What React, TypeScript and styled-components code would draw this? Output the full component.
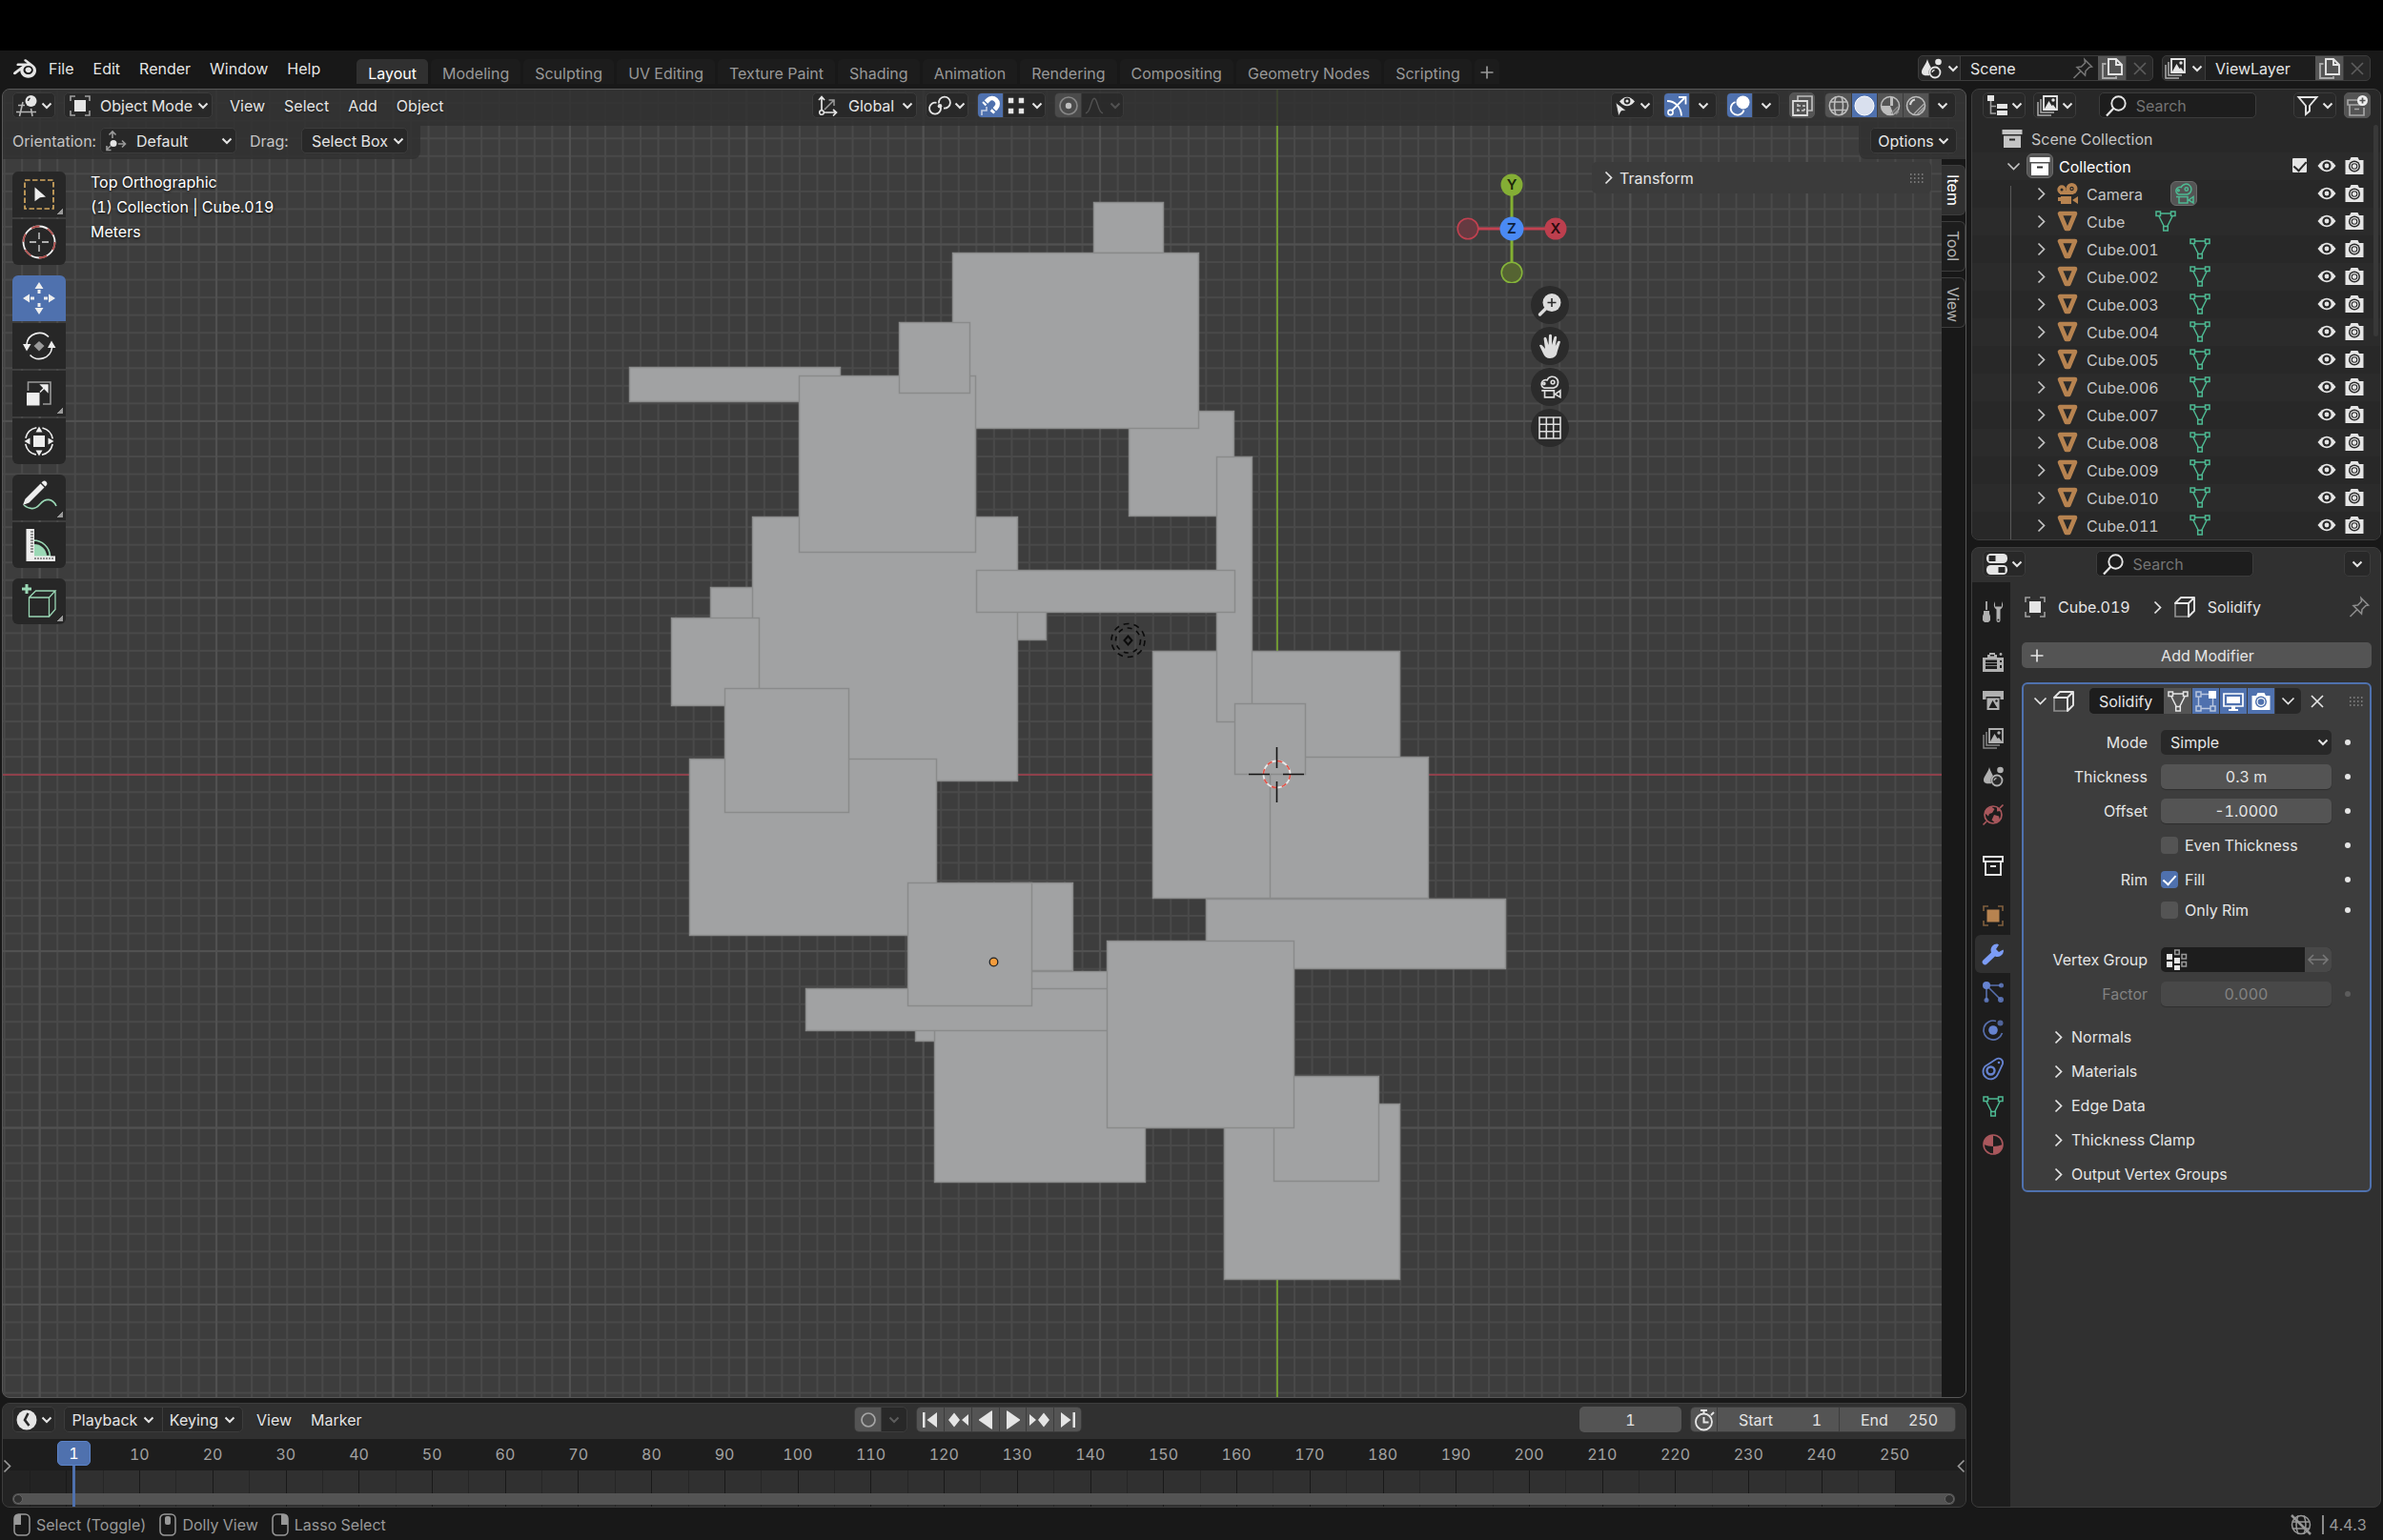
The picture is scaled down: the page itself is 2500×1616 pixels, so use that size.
import React from "react";
import styled, { createGlobalStyle, css } from "styled-components";
import { SiBlender } from "react-icons/si";

const BLUE = "#4f71ae";
const ORANGE = "#b78350";
const GREEN = "#4db992";
const RED = "#a9575c";

const GlobalStyle = createGlobalStyle`
  * { box-sizing: border-box; }
  body {
    margin: 0;
    background: #181818;
    color: #e5e5e5;
    font: 16px/20px Inter, "Noto Sans", sans-serif;
    font-variant-numeric: tabular-nums;
  }
  button, input, select {
    margin: 0;
    padding: 0;
    border: 0;
    background: none;
    color: inherit;
    font: inherit;
    font-variant-numeric: tabular-nums;
    outline: none;
  }
  svg { display: block; flex: none; }
`;

/* ---------- icons ---------- */

const Glyph = styled.svg<{ $size?: number; $color?: string }>`
  width: ${(p) => p.$size ?? 22}px;
  height: ${(p) => p.$size ?? 22}px;
  color: ${(p) => p.$color ?? "inherit"};
  fill: none;
  stroke: none;
  overflow: visible;
`;

const shapes: Record<string, React.ReactNode> = {
  editor3d: (
    <>
      <path d="M2 10.5h7M0 17.500h21M7 7L3.500 22M15.500 14l1.500 8" stroke="#b4b4b4" strokeWidth="1.6" />
      <circle cx="15.500" cy="6" r="6" fill="currentColor" />
      <path d="M12.500 6a3.500 3.500 0 0 1 2-3" stroke="#282828" strokeWidth="1.500" />
    </>
  ),
  objectMode: (
    <>
      <path d="M1 6V1h5M16 1h5v5M21 16v5h-5M6 21H1v-5" stroke="#a0a0a0" strokeWidth="1.6" />
      <rect x="5" y="5" width="12" height="12" fill="currentColor" />
    </>
  ),
  orient: (
    <>
      <path d="M7 8V2M3.500 4.500L7 1l3.500 3.500M13 14h7M17 10.500l3.500 3.500-3.500 3.500M5 16l-4 4M1 16v4.500h4.500" stroke="#9a9a9a" strokeWidth="1.6" />
      <circle cx="8" cy="13.500" r="3.500" fill="currentColor" />
    </>
  ),
  global: (
    <>
      <path d="M4 18V2M1 5l3-3.500L7 5M4 18h15M16 15l3.500 3L16 21.500" stroke="currentColor" strokeWidth="1.7" />
      <circle cx="4" cy="18" r="2.300" fill="#282828" stroke="currentColor" strokeWidth="1.500" />
      <path d="M7 15L17 5M11.500 5H17v6" stroke="#9a9a9a" strokeWidth="1.500" />
    </>
  ),
  pivot: (
    <>
      <path d="M10 8.500A6 6 0 1 1 15 13.500M12 13a6 6 0 1 1-4.500-5.200" stroke="currentColor" strokeWidth="1.8" />
      <circle cx="11" cy="11.200" r="2.300" fill="currentColor" />
    </>
  ),
  magnet: (
    <>
      <path d="M4 9.500L8.500 5A5.700 5.700 0 0 1 17 13L12.500 18" stroke="#fff" strokeWidth="4.800" />
      <path d="M3.500 5L9 10.500M12 12.500l5.500 5.500" stroke={BLUE} strokeWidth="1.400" />
      <path d="M2 21v-5h5v-4" stroke="#c5cfe3" strokeWidth="1.600" />
    </>
  ),
  snapGrid: <path d="M2 2h6v6H2zM14 2h6v6h-6zM2 14h6v6H2zM14 14h6v6h-6z" fill="currentColor" />,
  proportional: (
    <>
      <circle cx="11" cy="11" r="9" stroke="#a2a2a2" strokeWidth="1.700" />
      <circle cx="11" cy="11" r="3.200" fill="#eee" />
    </>
  ),
  falloff: <path d="M1 19.500c6 0 6-17 10-17s4 17 10 17" stroke="currentColor" strokeWidth="1.600" />,
  visibility: (
    <>
      <path d="M5 6.500Q13 -3 21 6.500Q13 16 5 6.500Z" fill="currentColor" />
      <circle cx="13" cy="6" r="3.400" fill="#282828" />
      <circle cx="13" cy="6" r="1.600" fill="currentColor" />
      <path d="M1 7.500l11 8.500-5 .5L4 22Z" fill="currentColor" stroke="#282828" strokeWidth=".8" />
    </>
  ),
  gizmo: (
    <>
      <path d="M1 6C9 6 15.500 12 16 21.500M6 16L19 3M13 2h7.500v7.500" stroke="#fff" strokeWidth="1.800" />
      <circle cx="4.500" cy="18" r="2.600" fill={BLUE} stroke="#fff" strokeWidth="1.600" />
    </>
  ),
  overlay: (
    <>
      <circle cx="14.500" cy="7.500" r="7" fill="#fff" />
      <path d="M6.500 7A7 7 0 1 0 15.500 15.500" stroke="#fff" strokeWidth="1.800" />
      <path d="M8 11a7 7 0 0 0 4 3.500" stroke={BLUE} strokeWidth="1.500" />
    </>
  ),
  xray: (
    <>
      <path d="M6 5V1h15v15h-4" stroke="#bdbdbd" strokeWidth="1.700" />
      <path d="M1 6h15v15H1z" stroke="#dcdcdc" strokeWidth="1.800" />
      <path d="M6 9v8M5 16h9M6 11h7v5" stroke="#ccc" strokeWidth="1.500" strokeDasharray="3 2" />
    </>
  ),
  wire: (
    <g stroke="#bdbdbd" strokeWidth="1.600">
      <circle cx="11" cy="11" r="9.700" />
      <path d="M2.500 7h17M2.500 15.500h17M8 1.500q-3 9.500 0 19M14 1.500q3 9.500 0 19" />
    </g>
  ),
  solid: <circle cx="11" cy="11" r="10" fill="#d9e0ee" stroke="#fff" />,
  matPreview: (
    <>
      <circle cx="11" cy="11" r="9.500" stroke="#bdbdbd" strokeWidth="1.500" />
      <path d="M11 1.500v9.500H1.500a9.500 9.500 0 0 0 13 8.800L11 11h3V2z" fill="#bdbdbd" />
      <path d="M14 20l5-5M12 19l7-7M17 20l3-3" stroke="#8a8a8a" strokeWidth="1.200" />
    </>
  ),
  rendered: (
    <>
      <circle cx="11" cy="11" r="9.500" stroke="#bdbdbd" strokeWidth="1.600" />
      <path d="M5 10a6.500 6.500 0 0 1 5-5.500" stroke="#d5d5d5" strokeWidth="2.200" />
      <path d="M9 19.500L20 8.500M12.500 19.500l7-7M16 18.500l3-3" stroke="#a9a9a9" strokeWidth="1.200" />
    </>
  ),
  tree: (
    <>
      <path d="M1 0h7v6H1zM11 9h11v5H11zM11 16h11v5H11z" fill="currentColor" />
      <path d="M4.500 6v13H10M4.500 11.500H10" stroke="#a0a0a0" strokeWidth="1.600" />
    </>
  ),
  stack: (
    <>
      <path d="M7 1h14v14H7z" stroke="currentColor" strokeWidth="1.800" />
      <path d="M8 14l4.500-8 3 5 1.500-1 3 4z" fill="currentColor" />
      <circle cx="17" cy="5" r="1.700" fill="currentColor" />
      <path d="M4 4v14h14M1 7v14h14" stroke="currentColor" strokeWidth="1.500" opacity=".7" />
    </>
  ),
  search: (
    <>
      <circle cx="13.500" cy="8.500" r="7.200" stroke="currentColor" strokeWidth="1.900" />
      <path d="M8.500 13.500L1 21.500" stroke="currentColor" strokeWidth="2.200" />
    </>
  ),
  filter: <path d="M1.500 2h19L13 11v5.500L9 20v-9Z" stroke="currentColor" strokeWidth="1.900" />,
  newCollection: (
    <>
      <path d="M11 5H1v5h15M3 10v11h15V13M8 14.500h5" stroke="#a5a5a5" strokeWidth="1.700" />
      <circle cx="16.500" cy="5.500" r="5.500" fill="#eee" />
      <path d="M16.500 2.500v6M13.500 5.500h6" stroke="#545454" strokeWidth="1.700" />
    </>
  ),
  box: (
    <>
      <path d="M.5 2h21v5H.5zM2 8.500h18V21H2z" fill="currentColor" />
      <path d="M8 11.500h6v2H8z" fill="#282828" />
    </>
  ),
  boxLine: (
    <>
      <path d="M1 2h20v5H1zM3 7v14h16V7" stroke="currentColor" strokeWidth="1.900" />
      <path d="M8 11h6v2H8z" fill="currentColor" />
    </>
  ),
  eye: (
    <>
      <path d="M1.500 11Q11 -1.500 20.500 11Q11 23.500 1.500 11Z" fill="currentColor" />
      <circle cx="11" cy="11" r="4.600" fill="#282828" />
      <circle cx="11" cy="11" r="2.400" fill="currentColor" />
    </>
  ),
  camera: (
    <>
      <path d="M1.500 5H6l1.500-3h7L16 5h4.500v15h-19z" fill="currentColor" />
      <circle cx="11" cy="11.500" r="6" fill="#282828" />
      <circle cx="11" cy="11.500" r="4.500" fill="currentColor" />
      <circle cx="11" cy="11.500" r="3.300" fill="#282828" />
      <circle cx="11" cy="11.500" r="2.200" fill="currentColor" />
    </>
  ),
  cameraBlue: (
    <>
      <path d="M1.500 5H6l1.500-3h7L16 5h4.500v15h-19z" fill="#fff" />
      <circle cx="11" cy="11.500" r="6" fill={BLUE} />
      <circle cx="11" cy="11.500" r="4.500" fill="#fff" />
      <circle cx="11" cy="11.500" r="3.300" fill={BLUE} />
    </>
  ),
  mesh: <path d="M3 3h16L12.300 19H9.700Z" stroke="currentColor" strokeWidth="4.600" strokeLinejoin="round" />,
  meshData: (
    <g stroke="currentColor" strokeWidth="1.500">
      <path d="M6 3h10M4 6l5.500 11M18 6l-5.500 11" />
      <path d="M1 1h4.500v4.500H1zM16.500 1H21v4.500h-4.500zM8.700 16.500h4.600V21H8.700z" />
    </g>
  ),
  movie: (
    <>
      <circle cx="5" cy="7" r="4.700" fill="currentColor" />
      <circle cx="15.500" cy="6" r="6" fill="currentColor" />
      <path d="M3 8h14v4H3zM4 14h11v8H4zM1 15h3v4H1zM16 18l6-4v8z" fill="currentColor" />
      <circle cx="5" cy="7" r="1.500" fill="#282828" />
      <circle cx="15.500" cy="6" r="2.200" fill="#282828" />
      <circle cx="15.500" cy="6" r="1" fill="currentColor" />
    </>
  ),
  movieLine: (
    <g stroke="currentColor" strokeWidth="1.500">
      <path d="M5.500 12A4 4 0 1 1 8.300 4.500A5.500 5.500 0 1 1 14.500 12Z" />
      <path d="M6 14.500h9V21H6zM3 14.500h3M16 18l5-3.500V21z" />
      <circle cx="5.300" cy="7.800" r="1" />
      <circle cx="13.800" cy="6.500" r="1.700" />
    </g>
  ),
  scene: (
    <>
      <path d="M7 1C8 6 12 10 12 14a6.500 6.500 0 0 1-2 4C5 19 1 18 1 14.500C1 11 6 6 7 1Z" fill="currentColor" />
      <circle cx="18.500" cy="4" r="3.300" fill="currentColor" />
      <circle cx="15" cy="15" r="6.500" fill="#282828" />
      <circle cx="15" cy="15" r="5.500" stroke="currentColor" strokeWidth="1.800" />
      <path d="M12 15a3 3 0 0 1 2.500-2.500" stroke="currentColor" strokeWidth="1.300" />
    </>
  ),
  pin: (
    <path d="M13 1.500l7.500 7.500-2.500.5-4 4-.5 4.500-8.500-8.500 4.500-.5 4-4zM9 13.500L1.500 21" stroke="currentColor" strokeWidth="1.600" />
  ),
  copy: (
    <>
      <path d="M7 1h8l6 6v10H7zM15 1v6h6" stroke="currentColor" strokeWidth="1.900" />
      <path d="M4.500 6H1v15h14v-2" stroke="#a9a9a9" strokeWidth="1.900" />
    </>
  ),
  cross: <path d="M5 5l12 12M17 5L5 17" stroke="currentColor" strokeWidth="1.700" />,
  toggles: (
    <>
      <rect x="0" y="0" width="22" height="10" rx="4.500" fill="currentColor" />
      <rect x="2.500" y="2" width="7" height="6" fill="#282828" />
      <rect x="0" y="12" width="22" height="10" rx="4.500" fill="currentColor" />
      <rect x="12.500" y="14" width="7" height="6" fill="#282828" />
    </>
  ),
  tools: (
    <>
      <path d="M4 0v9" stroke="currentColor" strokeWidth="1.800" />
      <path d="M1 10h6v3l1 2.500V20l-2 2H2l-2-2v-4.500L1 13z" fill="currentColor" />
      <path d="M13 0q-3 6 1.500 8.500V20a2 2 0 0 0 4 0V8.500Q23 6 20 0v5.500h-7z" fill="currentColor" />
      <circle cx="16.500" cy="19.500" r="1" fill="#1d1d1d" />
    </>
  ),
  render: (
    <>
      <path d="M0 6h5V3h2V1h6v2h2v3h7v15H0z" fill="currentColor" />
      <path d="M3 8.500h12V18H3z" fill="#1d1d1d" />
      <path d="M3 11.500h12M3 14.500h12" stroke="currentColor" strokeWidth=".7" />
      <path d="M18 9h2v2h-2zM18 14h2v3h-2zM8 3h4v1.500H8z" fill="#1d1d1d" />
      <circle cx="19" cy="2.500" r="1.400" fill="currentColor" />
    </>
  ),
  output: (
    <>
      <path d="M0 1h22v9h-3.500V7h-15v3H0zM4.500 8.500h13V21h-13z" fill="currentColor" />
      <path d="M6.500 19l4-8 3 5 2 3z" fill="#1d1d1d" />
      <circle cx="14.500" cy="11.500" r="1.200" fill="#1d1d1d" />
    </>
  ),
  world: (
    <>
      <circle cx="11" cy="11" r="9" stroke="currentColor" strokeWidth="1.700" />
      <path d="M3 5.500l6-3 3.500 2.500-2.500 4-3 1-1 2.500-3.500-3zM12 11l5 1.500 1 4-5 3-3.500-3zM15 3l4 4-4 .5z" fill="currentColor" />
      <path d="M18 4l3.500-3.500M4 18L.5 21.500" stroke="currentColor" strokeWidth="1.700" />
    </>
  ),
  object: (
    <>
      <path d="M1 6V1h5M16 1h5v5M21 16v5h-5M6 21H1v-5" stroke="currentColor" strokeWidth="1.600" opacity=".65" />
      <rect x="4.500" y="4.500" width="13" height="13" fill="currentColor" />
    </>
  ),
  wrench: (
    <path d="M15.500.5l1.500 1-3 4.500 3 3 4.500-2.500.5 1.500a6.500 6.500 0 0 1-9 5.500L4.500 21.500a2.800 2.800 0 0 1-4-4L9 9.500A6.500 6.500 0 0 1 15.500.5z" fill="currentColor" />
  ),
  particles: (
    <>
      <path d="M4 4h15M4 4v16M4 4l15 15" stroke="currentColor" strokeWidth="1.600" opacity=".8" />
      <circle cx="4" cy="4" r="4" fill="currentColor" />
      <circle cx="19.500" cy="4" r="2.500" fill="currentColor" opacity=".8" />
      <circle cx="4" cy="19.500" r="2.500" fill="currentColor" opacity=".8" />
      <circle cx="19" cy="19" r="3" fill="currentColor" opacity=".8" />
    </>
  ),
  physics: (
    <>
      <path d="M14 1.500A10 10 0 1 0 20.500 14" stroke="currentColor" strokeWidth="1.700" opacity=".8" />
      <circle cx="11" cy="11" r="4.800" fill="currentColor" />
      <circle cx="18.500" cy="3.500" r="3" fill="currentColor" opacity=".7" />
    </>
  ),
  constraint: (
    <>
      <path d="M2.500 9L14 1.500c4-2.500 8 1 7 5L16 17A8 8 0 1 1 2.500 9Z" stroke="currentColor" strokeWidth="1.800" />
      <circle cx="8.500" cy="13.500" r="4" stroke="currentColor" strokeWidth="2.400" />
      <circle cx="17" cy="5" r="1.300" fill="currentColor" />
    </>
  ),
  material: (
    <>
      <circle cx="11" cy="11" r="10" stroke="currentColor" strokeWidth="1.600" />
      <path d="M11 1v12q-5 0-10-2A10 10 0 0 1 11 1ZM11 13q5 0 10-2A10 10 0 0 1 11 21Z" fill="currentColor" />
    </>
  ),
  solidify: (
    <>
      <path d="M1 7h14v14H1z" stroke="#8f8f8f" strokeWidth="1.700" />
      <path d="M1 7l6-6h14l-6 6zM21 1v14l-6 6V7M1 7h14" stroke="currentColor" strokeWidth="1.900" strokeLinejoin="round" />
    </>
  ),
  editMode: (
    <>
      <path d="M3.500 5v12M5 3.500h9M5 18.500h12M18.500 8v9" stroke="#b9c6de" strokeWidth="1.400" />
      <path d="M1 1h5v5H1zM1 16h5v5H1zM16 16h5v5h-5z" stroke="#b9c6de" strokeWidth="1.500" fill={BLUE} />
      <rect x="14" y="0" width="8" height="8" fill="#fff" />
    </>
  ),
  monitor: (
    <>
      <path d="M1 3h20v13H1z" stroke="#fff" strokeWidth="1.700" />
      <path d="M4 6h14v7H4zM9 16h4v3h3v2H6v-2h3z" fill="#fff" />
    </>
  ),
  vgroup: (
    <>
      <path d="M0 5h6v6H0zM0 13h6v6H0zM8 9h6v6H8zM8 17h6v5H8z" fill="currentColor" />
      <path d="M8.700 1h4.500v4.500H8.700zM16 5.500h4.500V10H16zM16 13.500h4.500V18H16z" stroke="#9a9a9a" strokeWidth="1.500" />
    </>
  ),
  swap: <path d="M1 11h20M6 6l-5 5 5 5M16 6l5 5-5 5" stroke="currentColor" strokeWidth="1.600" />,
  clock: (
    <>
      <circle cx="11" cy="11" r="10.500" fill="currentColor" />
      <path d="M12.500 4L9 11l4.500 6" stroke="#282828" strokeWidth="2.600" />
    </>
  ),
  stopwatch: (
    <>
      <circle cx="10.500" cy="13" r="8.500" stroke="currentColor" strokeWidth="1.800" />
      <path d="M7 1h7M10.500 1v3.500M18 6l3-3M10.500 8v5.500h5" stroke="currentColor" strokeWidth="2" />
    </>
  ),
  plus: <path d="M11 4.500v13M4.500 11h13" stroke="currentColor" strokeWidth="1.700" />,
  record: <circle cx="11" cy="11" r="7" stroke="#a5a5a5" strokeWidth="1.700" />,
  toStart: <path d="M3 3h2.500v16H3zM18 3v16L7.500 11z" fill="currentColor" />,
  prevKey: <path d="M7 3.500L13 11l-6 7.500L1 11zM22 5v12l-7-6z" fill="currentColor" />,
  playBack: <path d="M18 2v18q0 1-1 .5L4 11.500v-1L17 1.500q1-.500 1 .5z" fill="currentColor" />,
  play: <path d="M4 2v18q0 1 1 .5l13-9v-1L5 1.500Q4 1 4 2z" fill="currentColor" />,
  nextKey: <path d="M15 3.500L21 11l-6 7.500L9 11zM0 5v12l7-6z" fill="currentColor" />,
  toEnd: <path d="M16.500 3H19v16h-2.500zM4 3v16l10.500-8z" fill="currentColor" />,
  offline: (
    <g stroke="currentColor" strokeWidth="1.500">
      <circle cx="11" cy="11" r="9.500" />
      <path d="M2 8h18M2 15h18M8 1.500q-4 9.500 0 19M14 1.500q4 9.500 0 19" />
      <path d="M1 1l20 20" strokeWidth="2.500" />
    </g>
  ),
};

const Icon = ({ name, size, color }: { name: string; size?: number; color?: string }) => (
  <Glyph viewBox="0 0 22 22" $size={size} $color={color} aria-hidden="true">
    {shapes[name]}
  </Glyph>
);

const Arrow = styled.svg<{ $w: number; $h: number }>`
  width: ${(p) => p.$w}px;
  height: ${(p) => p.$h}px;
  fill: none;
  stroke: currentColor;
  stroke-width: 2;
  pointer-events: none;
`;
const Caret = () => (
  <Arrow $w={12} $h={8} viewBox="0 0 12 8"><path d="M1.500 1.500L6 6l4.500-4.500" /></Arrow>
);
const ArrowRight = () => (
  <Arrow $w={9} $h={15} viewBox="0 0 9 15"><path d="M1.500 1.500L7.500 7.500l-6 6" strokeWidth="1.700" /></Arrow>
);
const ArrowDown = () => (
  <Arrow $w={15} $h={9} viewBox="0 0 15 9"><path d="M1.500 1.500L7.500 7.500l6-6" strokeWidth="1.700" /></Arrow>
);
const Grip = () => (
  <Glyph viewBox="0 0 16 16" $size={16} $color="#8a8a8a" aria-hidden="true">
    {[2, 6, 10, 14].map((x) => (
      <path key={x} d={`M${x} 4h1.500M${x} 8h1.500M${x} 12h1.500`} stroke="currentColor" strokeWidth="1.500" />
    ))}
  </Glyph>
);

/* ---------- shared controls ---------- */

const Row = styled.div<{ $gap?: number }>`
  display: flex;
  align-items: center;
  gap: ${(p) => p.$gap ?? 0}px;
`;

const Spacer = styled.span<{ $w: number }>`
  width: ${(p) => p.$w}px;
  flex: none;
`;

const Menus = styled.nav<{ $indent: number }>`
  display: flex;
  padding-left: ${(p) => p.$indent}px;
`;

const Control = styled.button<{ $w?: number; $tone?: "dark" | "grey" | "blue" }>`
  display: flex;
  align-items: center;
  justify-content: center;
  gap: 4px;
  flex: none;
  height: 27px;
  ${(p) => p.$w && css`width: ${p.$w}px;`}
  border-radius: 5px;
  border: 1px solid ${(p) => (p.$tone === "grey" ? "#585858" : p.$tone === "blue" ? BLUE : "#3c3c3c")};
  background: ${(p) => (p.$tone === "grey" ? "#545454" : p.$tone === "blue" ? BLUE : "#282828")};
`;

const Joined = styled.div<{ $dim?: boolean }>`
  display: flex;
  height: 27px;
  flex: none;
  border: 1px solid #3c3c3c;
  border-radius: 5px;
  background: #282828;
  overflow: hidden;
  opacity: ${(p) => (p.$dim ? 0.75 : 1)};
`;

const Segment = styled.button<{ $w: number; $tone?: "dark" | "grey" | "blue"; $faint?: boolean }>`
  display: flex;
  align-items: center;
  justify-content: center;
  gap: 6px;
  width: ${(p) => p.$w}px;
  height: 100%;
  color: ${(p) => (p.$faint ? "#5c5c5c" : "inherit")};
  background: ${(p) => (p.$tone === "grey" ? "#545454" : p.$tone === "blue" ? BLUE : "transparent")};
  & + & { border-left: 1px solid #3c3c3c; }
`;

const MenuLink = styled.button`
  height: 27px;
  padding: 0 10px;
  text-shadow: 0 1px 2px rgba(0, 0, 0, 0.5);
`;

const Picker = styled.span<{ $w: number; $plain?: boolean }>`
  display: flex;
  align-items: center;
  gap: 10px;
  width: ${(p) => p.$w}px;
  height: 27px;
  padding: 0 3px 0 ${(p) => (p.$plain ? 10 : 5)}px;
  border: 1px solid #3c3c3c;
  border-radius: 5px;
  background: #282828;
`;
const PickerSelect = styled.select`
  flex: 1;
  min-width: 0;
  margin-right: -8px;
  appearance: none;
`;
const Dropdown = ({ label, value, icon, width }: { label: string; value: string; icon?: string; width: number }) => (
  <Picker $w={width} $plain={!icon}>
    {icon && <Icon name={icon} />}
    <PickerSelect aria-label={label} defaultValue={value}><option>{value}</option></PickerSelect>
    <Caret />
  </Picker>
);

const IconMenu = ({ icon, label, width = 45 }: { icon: string; label: string; width?: number }) => (
  <Control $w={width} aria-label={label}><Icon name={icon} /><Caret /></Control>
);

const SearchBox = styled.label`
  display: flex;
  align-items: center;
  gap: 10px;
  width: 165px;
  height: 27px;
  padding: 0 6px;
  border: 1px solid #3c3c3c;
  border-radius: 5px;
  background: #1d1d1d;
`;
const SearchInput = styled.input`
  width: 100%;
  min-width: 0;
  &::placeholder { color: #747474; opacity: 1; }
`;

const Panel = styled.section`
  position: relative;
  display: flex;
  flex-direction: column;
  border: 1px solid #3d3d3d;
  border-radius: 8px;
  overflow: hidden;
`;

/* ---------- page frame ---------- */

const Page = styled.div`
  display: flex;
  flex-direction: column;
  min-height: 100vh;
`;
const Notch = styled.div`
  height: 53px;
  background: #000;
`;
const TopBar = styled.header`
  display: flex;
  height: 40px;
  padding: 0 13px 0 14px;
`;
const MainMenu = styled.nav`
  display: flex;
  align-items: center;
  padding-bottom: 2px;
  margin-right: 28px;
`;
const Logo = styled(SiBlender)`
  width: 24px;
  height: 24px;
  margin-right: 3px;
  color: #e5e5e5;
`;
const Tabs = styled.nav`
  display: flex;
  gap: 3px;
  padding: 9px 0 5px;
`;
const Tab = styled.button<{ $on?: boolean }>`
  padding: 4px 12px 0;
  border-radius: 5px 5px 0 0;
  color: ${(p) => (p.$on ? "#fff" : "#989898")};
  background: ${(p) => (p.$on ? "#303030" : "#1c1c1c")};
`;
const TabPlus = styled(Tab)`
  padding: 2px 2px 0;
`;
const SceneTools = styled.div`
  display: flex;
  align-items: flex-start;
  gap: 9px;
  margin-left: auto;
  padding-top: 5px;
`;
const NameBox = styled.input<{ $w: number }>`
  width: ${(p) => p.$w}px;
  padding-left: 10px;
  background: #1d1d1d;
  border-left: 1px solid #3c3c3c;
`;
const PinCell = styled.span`
  display: flex;
  align-items: center;
  padding-right: 5px;
  color: #747474;
  background: #1d1d1d;
`;

const Workspace = styled.main`
  flex: 1;
  display: grid;
  grid-template-columns: minmax(0, 1fr) 430px;
  gap: 5px;
  padding: 0 2px;
`;
const Column = styled.div<{ $gap: number }>`
  display: flex;
  flex-direction: column;
  gap: ${(p) => p.$gap}px;
`;

/* ---------- 3D viewport ---------- */

const Viewport = styled(Panel)`
  flex: 1;
  background: #3d3d3d;
  border-color: #585858;
`;
const Canvas = styled.svg`
  position: absolute;
  inset: 0;
  width: 100%;
  height: 100%;
`;
const HeaderGrid = styled.div<{ $clear?: boolean }>`
  position: relative;
  display: grid;
  grid-template-columns: minmax(0, 1fr) auto minmax(0, 1fr);
  padding: 3px 10px ${(p) => (p.$clear ? 8 : 7)}px;
  background: ${(p) => (p.$clear ? "rgba(48, 48, 48, 0.82)" : "#303030")};
`;
const Middle = styled(Row)`
  padding-right: 34px;
`;
const End = styled(Row)`
  justify-content: flex-end;
`;
const ToolSettings = styled.div`
  position: relative;
  display: flex;
  justify-content: space-between;
`;
const SettingsChip = styled.div<{ $side: "left" | "right" }>`
  display: flex;
  align-items: center;
  padding: 2px ${(p) => (p.$side === "left" ? "13px 6px 10px" : "9px 6px 12px")};
  border-radius: ${(p) => (p.$side === "left" ? "0 0 8px 0" : "0 0 0 8px")};
  background: rgba(48, 48, 48, 0.82);
`;
const FieldName = styled.span<{ $w: number }>`
  width: ${(p) => p.$w}px;
  color: #c4c4c4;
`;
const ViewBody = styled.div`
  position: relative;
  flex: 1;
  display: flex;
  align-items: stretch;
`;
const ToolShelf = styled.aside`
  display: flex;
  flex-direction: column;
  gap: 11px;
  padding: 13px 26px 0 10px;
`;
const ToolGroup = styled.div`
  display: flex;
  flex-direction: column;
  gap: 2px;
  border-radius: 6px;
  overflow: hidden;
`;
const Tool = styled.button<{ $on?: boolean; $more?: boolean }>`
  display: flex;
  align-items: center;
  justify-content: center;
  width: 56px;
  height: 48px;
  background: ${(p) =>
    p.$on ? BLUE : p.$more ? "linear-gradient(135deg, transparent 50%, #999 50%) calc(100% - 3px) calc(100% - 3px) / 6px 6px no-repeat #272727" : "#272727"};
`;
const Overlay = styled.div`
  padding-top: 11px;
  line-height: 26px;
  color: #fff;
  text-shadow: 0 1px 3px #000;
`;
const NavColumn = styled.div`
  display: flex;
  flex-direction: column;
  align-items: flex-end;
  gap: 3px;
  margin: 15px 24px 0 auto;
`;
const NavButton = styled.button`
  display: flex;
  align-items: center;
  justify-content: center;
  width: 40px;
  height: 40px;
  border-radius: 50%;
  background: #2b2b2b;
`;
const AxisLetter = styled.text`
  font-size: 15px;
  font-weight: 600;
  text-anchor: middle;
`;
const SidePanel = styled.button`
  display: flex;
  align-items: center;
  gap: 7px;
  width: 356px;
  height: 33px;
  margin: 3px 11px 0 0;
  padding: 0 8px 0 13px;
  border-radius: 5px;
  background: #3b3b3b;
  & > :last-child { margin-left: auto; }
`;
const SideTabs = styled.nav`
  display: flex;
  flex-direction: column;
  gap: 6px;
  width: 25px;
  padding-top: 6px;
  background: #181818;
`;
const SideTab = styled.button<{ $on?: boolean }>`
  writing-mode: vertical-rl;
  padding: 9px 0;
  height: 53px;
  border: 1px solid #3d3d3d;
  border-left: 0;
  border-radius: 0 6px 6px 0;
  color: ${(p) => (p.$on ? "#fff" : "#b0b0b0")};
  background: ${(p) => (p.$on ? "#303030" : "#1d1d1d")};
`;

/* left, top, right, bottom of every block, from the lowest to the highest */
const blocks = [
  [1147, 212, 1221, 266],
  [1184, 431, 1295, 542],
  [999, 265, 1258, 450],
  [660, 385, 882, 422],
  [745, 616, 1098, 672],
  [789, 542, 1068, 820],
  [838, 394, 1024, 580],
  [943, 338, 1018, 413],
  [704, 648, 797, 741],
  [1209, 683, 1469, 943],
  [1332, 794, 1499, 943],
  [1276, 479, 1314, 758],
  [1024, 598, 1296, 643],
  [723, 796, 983, 982],
  [760, 722, 891, 853],
  [1295, 738, 1370, 813],
  [1265, 943, 1580, 1017],
  [960, 1019, 1300, 1093],
  [980, 1060, 1202, 1241],
  [1060, 926, 1126, 1019],
  [845, 1037, 1300, 1082],
  [952, 926, 1083, 1056],
  [1284, 1158, 1469, 1343],
  [1336, 1129, 1447, 1240],
  [1161, 987, 1358, 1184],
];

const Scene = () => (
  <Canvas aria-label="Top view of the scene">
    <defs>
      <pattern id="minor" x="1339.5" y="812.7" width="18.54" height="18.54" patternUnits="userSpaceOnUse">
        <path d="M0 0V18.540M18.540 0V18.540M0 0H18.540M0 18.540H18.540" stroke="#494949" strokeWidth="2" />
      </pattern>
      <pattern id="major" x="1339.5" y="812.7" width="185.4" height="185.4" patternUnits="userSpaceOnUse">
        <path d="M0 0V185.400M185.400 0V185.400M0 0H185.400M0 185.400H185.400" stroke="#515151" strokeWidth="2" />
      </pattern>
    </defs>
    <g transform="translate(-3 -94)">
      <rect width="100%" height="100%" x="3" y="94" fill="url(#minor)" />
      <rect width="100%" height="100%" x="3" y="94" fill="url(#major)" />
      <path d="M0 813H4000" stroke="#8e404b" strokeWidth="2" />
      <path d="M1340 0V4000" stroke="#6f9632" strokeWidth="2" />
      {blocks.map(([l, t, r, b], i) => (
        <rect key={i} x={l + 0.5} y={t + 0.5} width={r - l - 1} height={b - t - 1} fill="#a1a2a3" stroke="#8a8b8b" strokeWidth="1.500" />
      ))}
      <g stroke="#0b0b0b" fill="none" strokeWidth="1.600">
        <circle cx="1183.500" cy="672" r="17.500" strokeDasharray="6 5" />
        <circle cx="1183.500" cy="672" r="13" strokeDasharray="5 5" />
        <path d="M1183.500 667.500l4 4.500-4 4.500-4-4.500z" strokeWidth="2" />
      </g>
      <circle cx="1339.500" cy="812.500" r="14" fill="none" stroke="#e8e8e8" strokeWidth="1.800" />
      <circle cx="1339.500" cy="812.500" r="14" fill="none" stroke="#e0564c" strokeWidth="1.800" strokeDasharray="5.500 5.500" />
      <path d="M1339.500 784v22M1339.500 820v22M1310 812.500h22M1346 812.500h22" stroke="#151515" strokeWidth="1.600" />
      <circle cx="1042.500" cy="1009.500" r="4.300" fill="#f59c3c" stroke="#222" strokeWidth="1.300" />
    </g>
  </Canvas>
);

const Gizmo = () => (
  <svg width="120" height="115" viewBox="0 0 120 115" aria-label="Rotate the view">
    <path d="M14 58h46M60 58h46" stroke="#c24150" strokeWidth="3" />
    <path d="M60 12v92" stroke="#83b032" strokeWidth="3" />
    <circle cx="14" cy="58" r="10.800" fill="#663a41" stroke="#c24150" strokeWidth="1.600" />
    <circle cx="60" cy="104" r="10.800" fill="#556432" stroke="#86b53a" strokeWidth="1.600" />
    <circle cx="106" cy="58" r="11.500" fill="#bd3f4e" />
    <circle cx="60" cy="12" r="11.500" fill="#84ae35" />
    <circle cx="60" cy="58" r="12.500" fill="#4a8af4" />
    <AxisLetter x="60" y="17" fill="#1c260b">Y</AxisLetter>
    <AxisLetter x="106" y="63" fill="#2b0b0f">X</AxisLetter>
    <AxisLetter x="60" y="63" fill="#0e1f3b">Z</AxisLetter>
  </svg>
);

/* tool shelf drawings, 36px square */
const toolArt: Record<string, React.ReactNode> = {
  select: (
    <>
      <rect x="3" y="3" width="30" height="30" stroke="#d3a860" strokeWidth="1.700" strokeDasharray="5.500 2.500" />
      <path d="M13.500 10.500L25 20.500l-6 .8-5.500 4z" fill="#eee" />
    </>
  ),
  cursor: (
    <>
      <circle cx="18" cy="18" r="16.500" stroke="#f2f2f2" strokeWidth="1.800" />
      <circle cx="18" cy="18" r="16.500" stroke="#b0504e" strokeWidth="1.800" strokeDasharray="8.640 8.640" />
      <path d="M18 8v7M18 21v7M8 18h7M21 18h7" stroke="#ddd" strokeWidth="1.300" />
    </>
  ),
  move: (
    <path d="M18 1l4.500 7h-9zM18 35l4.500-7h-9zM1 18l7-4.500v9zM35 18l-7-4.500v9zM16.500 9h3v4h-3zM16.500 23h3v4h-3zM9 16.500h4v3H9zM23 16.500h4v3h-4z" fill="#eee" />
  ),
  rotate: (
    <>
      <path d="M5 16A13.500 13.500 0 0 1 28 8.500M31.500 20A13.500 13.500 0 0 1 8.500 27.500" stroke="#eee" strokeWidth="1.600" />
      <path d="M1 16h8.500L5 23.500zM27 20h8.500L31 12.500z" fill="#eee" />
      <path d="M18 13l5.500 5-5.500 5.500-5.500-5.500z" fill="#999" />
    </>
  ),
  scale: (
    <>
      <path d="M6.500 15V6H30v23h-8" stroke="#999" strokeWidth="1.600" />
      <rect x="5" y="17" width="13.500" height="13.500" fill="#eee" />
      <path d="M19 16.500l4-4M20 9h7v7z" stroke="#eee" strokeWidth="1.400" fill="#eee" />
    </>
  ),
  transform: (
    <>
      <circle cx="18" cy="18" r="14.500" stroke="#eee" strokeWidth="1.600" strokeDasharray="16.500 6.270" strokeDashoffset="-3.100" />
      <path d="M12 12h12v12H12zM18 2.500l3.500 6h-7zM18 33.500l3.500-6h-7zM2.500 18l6-3.500v7zM33.500 18l-6-3.500v7z" fill="#eee" />
    </>
  ),
  annotate: (
    <>
      <path d="M2 26c6 5 12 5 17-1s13-7 17 2" stroke="#9ad8b5" strokeWidth="1.600" />
      <path d="M1 26l2.500-6.500L19.500 3.500l4 4L7.500 23.500zM20.500 2.500l1.500-1.500q2-1 3.500.5t.5 3.500L24.500 6.500z" fill="#eee" />
    </>
  ),
  measure: (
    <>
      <path d="M12 13A17.500 17.500 0 0 1 29.500 29.500H12z" fill="none" stroke="#9ad8b5" strokeWidth="1.600" />
      <path d="M13 17A13 13 0 0 1 26 29H13z" fill="#9ad8b5" />
      <path d="M4.500 1H13v28.500h22V35H4.500z" fill="#eee" />
      <path d="M9 4h3M9 7h3M9 10h3M9 13h3M9 16h3M9 19h3M9 22h3M9 25h3M14 31v2M17 31v2M20 31v2M23 31v2M26 31v2M29 31v2M32 31v2" stroke="#333" />
    </>
  ),
  addCube: (
    <>
      <path d="M5 0v10M0 5h10" stroke="#9ad8b5" strokeWidth="3" />
      <path d="M7.500 14h21v20h-21zM7.500 14l7-7h20.500l-6.500 7M35 7v19.500L28.500 34" stroke="#9ad8b5" strokeWidth="1.300" />
    </>
  ),
};
const ToolArt = ({ name }: { name: string }) => (
  <Glyph viewBox="0 0 36 36" $size={36} aria-hidden="true">{toolArt[name]}</Glyph>
);
const toolGroups: [string, string, boolean][][] = [
  [["select", "Select Box", true], ["cursor", "Cursor", false]],
  [["move", "Move", false], ["rotate", "Rotate", false], ["scale", "Scale", true], ["transform", "Transform", false]],
  [["annotate", "Annotate", true], ["measure", "Measure", false]],
  [["addCube", "Add Cube", true]],
];

const Hand = () => (
  <Glyph viewBox="0 0 24 26" $size={26} $color="#ddd" aria-hidden="true">
    <path
      d="M1 12.500q1-1.500 3 0l3 3.500L5.500 5q1.500-2.500 3 0L10.500 12 11 1.800q1.500-2 3 0L14 12l2.500-8.500q2-1.500 2.700.5L17.800 13l2.700-5q2-1 2.500.8L20 18q-1 8-8 8-5 0-7-5z"
      fill="currentColor"
    />
  </Glyph>
);
const Magnify = () => (
  <Glyph viewBox="0 0 24 24" $size={24} $color="#ddd" aria-hidden="true">
    <circle cx="14" cy="9.500" r="9.500" fill="currentColor" />
    <path d="M9 14.500L1.500 22" stroke="currentColor" strokeWidth="3.500" strokeLinecap="round" />
    <path d="M14 5v9M9.500 9.500h9" stroke="#2b2b2b" strokeWidth="1.600" />
  </Glyph>
);
const GridIcon = () => (
  <Glyph viewBox="0 0 24 24" $size={24} $color="#ddd" aria-hidden="true">
    <path d="M1 1h22v22H1zM8.300 1v22M15.700 1v22M1 8.300h22M1 15.700h22" stroke="currentColor" strokeWidth="1.600" />
  </Glyph>
);

const ViewportArea = () => (
  <Viewport>
    <Scene />
    <HeaderGrid $clear>
      <Row>
        <Row $gap={9}>
          <IconMenu icon="editor3d" label="Editor type" />
          <Dropdown icon="objectMode" label="Mode" value="Object Mode" width={156} />
        </Row>
        <Menus $indent={8}>
          {["View", "Select", "Add", "Object"].map((m) => <MenuLink key={m}>{m}</MenuLink>)}
        </Menus>
      </Row>
      <Middle $gap={9}>
        <Dropdown icon="global" label="Transform orientation" value="Global" width={110} />
        <IconMenu icon="pivot" label="Pivot point" />
        <Joined>
          <Segment $w={26} $tone="blue" aria-label="Snap"><Icon name="magnet" /></Segment>
          <Segment $w={44} aria-label="Snap to"><Icon name="snapGrid" size={20} /><Caret /></Segment>
        </Joined>
        <Joined $dim>
          <Segment $w={27} $tone="grey" aria-label="Proportional editing"><Icon name="proportional" /></Segment>
          <Segment $w={44} $faint aria-label="Falloff"><Icon name="falloff" size={20} /><Caret /></Segment>
        </Joined>
      </Middle>
      <End $gap={10}>
        <IconMenu icon="visibility" label="Object types" />
        <Joined>
          <Segment $w={26} $tone="blue" aria-label="Gizmos"><Icon name="gizmo" /></Segment>
          <Segment $w={28} aria-label="Gizmo options"><Caret /></Segment>
        </Joined>
        <Joined>
          <Segment $w={26} $tone="blue" aria-label="Overlays"><Icon name="overlay" /></Segment>
          <Segment $w={28} aria-label="Overlay options"><Caret /></Segment>
        </Joined>
        <Control $w={27} $tone="grey" aria-label="X-ray"><Icon name="xray" /></Control>
        <Joined>
          <Segment $w={27} $tone="grey" aria-label="Wireframe"><Icon name="wire" /></Segment>
          <Segment $w={27} $tone="blue" aria-label="Solid"><Icon name="solid" /></Segment>
          <Segment $w={27} $tone="grey" aria-label="Material preview"><Icon name="matPreview" /></Segment>
          <Segment $w={27} $tone="grey" aria-label="Rendered"><Icon name="rendered" /></Segment>
          <Segment $w={28} aria-label="Shading options"><Caret /></Segment>
        </Joined>
      </End>
    </HeaderGrid>
    <ToolSettings>
      <SettingsChip $side="left">
        <FieldName $w={92}>Orientation:</FieldName>
        <Dropdown icon="orient" label="Orientation" value="Default" width={143} />
        <Spacer $w={14} />
        <FieldName $w={54}>Drag:</FieldName>
        <Dropdown label="Drag" value="Select Box" width={112} />
      </SettingsChip>
      <SettingsChip $side="right">
        <Control $w={91}>Options<Caret /></Control>
      </SettingsChip>
    </ToolSettings>
    <ViewBody>
      <ToolShelf>
        {toolGroups.map((group, i) => (
          <ToolGroup key={i}>
            {group.map(([art, label, more]) => (
              <Tool key={art} aria-label={label} $on={art === "move"} $more={more}><ToolArt name={art} /></Tool>
            ))}
          </ToolGroup>
        ))}
      </ToolShelf>
      <Overlay>
        <div>Top Orthographic</div>
        <div>(1) Collection | Cube.019</div>
        <div>Meters</div>
      </Overlay>
      <NavColumn>
        <Gizmo />
        <NavButton aria-label="Zoom"><Magnify /></NavButton>
        <NavButton aria-label="Pan"><Hand /></NavButton>
        <NavButton aria-label="Camera view"><Icon name="movieLine" size={24} color="#ddd" /></NavButton>
        <NavButton aria-label="Perspective"><GridIcon /></NavButton>
      </NavColumn>
      <SidePanel><ArrowRight />Transform<Grip /></SidePanel>
      <SideTabs>
        <SideTab $on>Item</SideTab>
        <SideTab>Tool</SideTab>
        <SideTab>View</SideTab>
      </SideTabs>
    </ViewBody>
  </Viewport>
);

/* ---------- timeline ---------- */

const NumberBox = styled.label<{ $w: number; $solo?: boolean }>`
  display: flex;
  align-items: center;
  justify-content: space-between;
  width: ${(p) => p.$w}px;
  height: ${(p) => (p.$solo ? "27px" : "100%")};
  padding: 0 ${(p) => (p.$solo ? 6 : 18)}px 0 ${(p) => (p.$solo ? 6 : 22)}px;
  border-left: ${(p) => (p.$solo ? "0" : "1px solid #3c3c3c")};
  border-radius: ${(p) => (p.$solo ? "5px" : "0")};
  background: #545454;
`;
const NumberInput = styled.input<{ $align?: string }>`
  flex: 1;
  width: 40px;
  min-width: 0;
  text-align: ${(p) => p.$align ?? "right"};
`;
const Timeline = styled(Panel)`
  height: 110px;
  background: #303030;
`;
const Ruler = styled.div`
  display: grid;
  grid-template-columns: repeat(25, minmax(0, 1fr));
  padding: 6px 36px 7px 105px;
  text-align: center;
  color: #a2a2a2;
  background: #1d1d1d;
`;
const Track = styled.div`
  flex: 1;
  display: grid;
  grid-template-columns: repeat(52, minmax(0, 1fr));
  padding: 0 36px 0 28px;
  background: #232323;
`;
const Cell = styled.div<{ $major: boolean; $out: boolean; $first: boolean }>`
  border-left: 1px solid ${(p) => (p.$out && !p.$major ? "#1e1e1e" : p.$major ? "#191919" : "#262626")};
  background: ${(p) =>
    p.$out ? "#232323" : p.$first ? "linear-gradient(90deg, #232323 8px, #303030 8px)" : "#303030"};
`;
const Playhead = styled.div`
  position: absolute;
  left: 57px;
  top: 39px;
  bottom: 0;
  width: 35px;
  background: linear-gradient(${BLUE}, ${BLUE}) center / 3px 100% no-repeat;
`;
const FrameTag = styled.div`
  height: 26px;
  border: 1px solid #5c83c8;
  border-radius: 5px;
  line-height: 24px;
  text-align: center;
  color: #fff;
  background: ${BLUE};
`;
const ScrollTrack = styled.div`
  position: absolute;
  left: 10px;
  right: 11px;
  bottom: 2px;
  height: 12px;
  padding: 0 1px;
  display: flex;
  align-items: center;
  justify-content: space-between;
  border-radius: 6px;
  background: #545454;
`;
const Knob = styled.span`
  width: 10px;
  height: 10px;
  border: 1px solid #666;
  border-radius: 50%;
  background: #303030;
`;
const Expander = styled.span<{ $side: "left" | "right" }>`
  position: absolute;
  top: 58px;
  ${(p) => p.$side}: 0;
  display: flex;
  color: #999;
  transform: ${(p) => (p.$side === "right" ? "rotate(180deg)" : "none")};
`;

const TimelineArea = () => (
  <Timeline>
    <HeaderGrid>
      <Row>
        <Row $gap={9}>
          <IconMenu icon="clock" label="Editor type" />
          <Joined>
            <Segment $w={102}>Playback<Caret /></Segment>
            <Segment $w={84}>Keying<Caret /></Segment>
          </Joined>
        </Row>
        <Menus $indent={4}>
          <MenuLink>View</MenuLink>
          <MenuLink>Marker</MenuLink>
        </Menus>
      </Row>
      <Middle $gap={9}>
        <Joined>
          <Segment $w={27} $tone="grey" aria-label="Auto keying"><Icon name="record" /></Segment>
          <Segment $w={27} $faint aria-label="Auto keying options"><Caret /></Segment>
        </Joined>
        <Joined>
          {[
            ["toStart", "Jump to start"], ["prevKey", "Previous key"], ["playBack", "Play reversed"],
            ["play", "Play"], ["nextKey", "Next key"], ["toEnd", "Jump to end"],
          ].map(([icon, label], i) => (
            <Segment key={icon} $w={i % 3 ? 29 : 28} $tone="grey" aria-label={label}><Icon name={icon} /></Segment>
          ))}
        </Joined>
      </Middle>
      <End $gap={9}>
        <NumberBox $w={107} $solo><NumberInput aria-label="Current frame" defaultValue="1" $align="center" /></NumberBox>
        <Joined>
          <Segment $w={27} $tone="grey" aria-label="Use preview range"><Icon name="stopwatch" /></Segment>
          <NumberBox $w={128}>Start<NumberInput defaultValue="1" /></NumberBox>
          <NumberBox $w={122}>End<NumberInput defaultValue="250" /></NumberBox>
        </Joined>
      </End>
    </HeaderGrid>
    <Ruler>
      {Array.from({ length: 25 }, (_, i) => <span key={i}>{(i + 1) * 10}</span>)}
    </Ruler>
    <Track>
      {Array.from({ length: 52 }, (_, i) => (
        <Cell key={i} $major={i % 2 === 1} $out={i < 1 || i > 50} $first={i === 1} />
      ))}
    </Track>
    <ScrollTrack><Knob /><Knob /></ScrollTrack>
    <Playhead><FrameTag>1</FrameTag></Playhead>
    <Expander $side="left"><ArrowRight /></Expander>
    <Expander $side="right"><ArrowRight /></Expander>
  </Timeline>
);

/* ---------- outliner ---------- */

const Outliner = styled(Panel)`
  background: #282828;
`;
const OutlinerHeader = styled.div`
  display: flex;
  padding: 3px 10px 7px 11px;
  gap: 8px;
`;
const Gap = styled.span`
  flex: 1;
`;
const Tree = styled.ul`
  position: relative;
  margin: 0;
  padding: 0;
  list-style: none;
`;
const TreeRow = styled.li<{ $depth: number; $odd?: boolean; $bright?: boolean }>`
  display: flex;
  align-items: center;
  height: 29px;
  padding: 0 16px 0 ${(p) => p.$depth * 29}px;
  color: ${(p) => (p.$bright ? "#fff" : "#c4c4c4")};
  background: ${(p) => (p.$odd ? "#2b2b2b" : "#282828")};
`;
const Twist = styled.span`
  display: flex;
  align-items: center;
  justify-content: center;
  width: 28px;
  color: #c4c4c4;
`;
const Badge = styled.span<{ $on?: boolean }>`
  display: flex;
  align-items: center;
  justify-content: center;
  width: 28px;
  height: 26px;
  margin-bottom: 2px;
  border-radius: 6px;
  border: ${(p) => (p.$on ? "1px solid #6c6c6c" : "0")};
  background: ${(p) => (p.$on ? "#545454" : "none")};
`;
const RowName = styled.span`
  margin: 0 29px 0 6px;
`;
const Restrict = styled.span`
  display: flex;
  align-items: center;
  gap: 7px;
  margin: 0 0 2px auto;
  color: #e5e5e5;
`;
const IconButton = styled.button`
  display: flex;
`;
const Tick = styled.input<{ $light?: boolean }>`
  appearance: none;
  position: relative;
  width: ${(p) => (p.$light ? 15 : 18)}px;
  height: ${(p) => (p.$light ? 15 : 18)}px;
  margin-right: ${(p) => (p.$light ? 3 : 0)}px;
  border-radius: ${(p) => (p.$light ? 1 : 4)}px;
  background: ${(p) => (p.$light ? "#e5e5e5" : "#545454")};
  &:checked { background: ${(p) => (p.$light ? "#e5e5e5" : BLUE)}; }
  &:checked::after {
    content: "";
    position: absolute;
    left: 50%;
    top: 45%;
    width: 6px;
    height: 11px;
    border: solid ${(p) => (p.$light ? "#282828" : "#fff")};
    border-width: 0 2px 2px 0;
    transform: translate(-50%, -50%) rotate(42deg);
  }
`;
const Guide = styled.span`
  position: absolute;
  left: 40px;
  top: 64px;
  bottom: 0;
  width: 1px;
  background: #585858;
`;
const Scrollbar = styled.span`
  position: absolute;
  right: 2px;
  top: 0;
  width: 5px;
  height: 222px;
  border-radius: 3px;
  background: #383838;
`;

const objects = ["Camera", "Cube", ...Array.from({ length: 11 }, (_, i) => `Cube.${String(i + 1).padStart(3, "0")}`)];

const RowSwitches = ({ check }: { check?: boolean }) => (
  <Restrict>
    {check && <Tick type="checkbox" $light defaultChecked aria-label="Include in view layer" />}
    <IconButton aria-label="Hide in viewport"><Icon name="eye" /></IconButton>
    <IconButton aria-label="Disable in renders"><Icon name="camera" /></IconButton>
  </Restrict>
);

const OutlinerArea = () => (
  <Outliner>
    <OutlinerHeader>
      <IconMenu icon="tree" label="Editor type" />
      <IconMenu icon="stack" label="Display mode" />
      <Gap />
      <SearchBox><Icon name="search" /><SearchInput placeholder="Search" aria-label="Search the outliner" /></SearchBox>
      <Gap /><Gap />
      <IconMenu icon="filter" label="Filter" />
      <Control $w={28} $tone="grey" aria-label="New collection"><Icon name="newCollection" /></Control>
    </OutlinerHeader>
    <Tree>
      <TreeRow $depth={0}>
        <Twist /><Badge><Icon name="box" /></Badge><RowName>Scene Collection</RowName>
      </TreeRow>
      <TreeRow $depth={1} $odd $bright>
        <Twist><ArrowDown /></Twist><Badge $on><Icon name="box" /></Badge><RowName>Collection</RowName>
        <RowSwitches check />
      </TreeRow>
      {objects.map((name, i) => (
        <TreeRow key={name} $depth={2} $odd={i % 2 === 1}>
          <Twist><ArrowRight /></Twist>
          <Badge><Icon name={i ? "mesh" : "movie"} color={ORANGE} /></Badge>
          <RowName>{name}</RowName>
          <Badge $on={!i}><Icon name={i ? "meshData" : "movieLine"} color={GREEN} /></Badge>
          <RowSwitches />
        </TreeRow>
      ))}
      <Guide />
      <Scrollbar />
    </Tree>
  </Outliner>
);

/* ---------- properties editor ---------- */

const Properties = styled(Panel)`
  flex: 1;
  background: #303030;
`;
const PropHeader = styled.div`
  display: flex;
  justify-content: space-between;
  padding: 3px 10px 6px 11px;
`;
const SearchShift = styled.div`
  padding-right: 22px;
`;
const PropBody = styled.div`
  flex: 1;
  display: flex;
`;
const PropTabs = styled.nav`
  display: flex;
  flex-direction: column;
  gap: 13px;
  width: 40px;
  padding: 11px 0 0 3px;
  background: #1d1d1d;
`;
const PropTab = styled.button<{ $on?: boolean }>`
  display: flex;
  align-items: center;
  justify-content: center;
  width: 37px;
  height: 40px;
  border-radius: 6px 0 0 6px;
  background: ${(p) => (p.$on ? "#303030" : "transparent")};
`;
const PropContent = styled.div`
  flex: 1;
  min-width: 0;
  padding: 11px 9px 0 12px;
`;
const Crumbs = styled.div`
  display: flex;
  align-items: center;
  gap: 13px;
  height: 30px;
  padding: 0 2px 0 3px;
  margin-bottom: 22px;
`;
const CrumbArrow = styled.span`
  display: flex;
  padding-left: 11px;
`;
const PinButton = styled.button`
  margin-left: auto;
  color: #8c8c8c;
`;
const AddModifier = styled.button`
  display: flex;
  align-items: center;
  width: 100%;
  height: 27px;
  margin-bottom: 15px;
  padding: 0 4px 0 5px;
  border-radius: 5px;
  background: #545454;
  & > span { flex: 1; }
`;
const Modifier = styled.div`
  padding: 4px 7px 4px 10px;
  border: 2px solid ${BLUE};
  border-radius: 6px;
  background: #3d3d3d;
`;
const ModHead = styled.div`
  display: flex;
  align-items: center;
  gap: 6px;
  height: 27px;
  margin-bottom: 17px;
  & > :last-child { margin-left: auto; }
`;
const ModStrip = styled.div`
  display: flex;
  height: 27px;
  margin-left: 10px;
  border-radius: 5px;
  overflow: hidden;
  background: #282828;
`;
const ModName = styled.input`
  width: 78px;
  padding-left: 10px;
  background: #1d1d1d;
`;
const Fields = styled.div`
  display: grid;
  grid-template-columns: 120px minmax(0, 1fr) 6px;
  column-gap: 14px;
  row-gap: 10px;
  align-items: center;
  padding-right: 13px;
`;
const Label = styled.label<{ $dim?: boolean }>`
  height: 26px;
  line-height: 26px;
  text-align: right;
  white-space: nowrap;
  color: ${(p) => (p.$dim ? "#828282" : "#e5e5e5")};
`;
const Value = styled.input`
  width: 100%;
  height: 26px;
  border-radius: 5px;
  text-align: center;
  background: #545454;
  box-shadow: 0 1px 1px rgba(0, 0, 0, 0.25);
  &:disabled { color: #828282; background: #484848; }
`;
const ModeBox = styled.span`
  display: flex;
  align-items: center;
  height: 26px;
  padding: 0 3px 0 10px;
  border-radius: 5px;
  background: #282828;
`;
const TickLine = styled.label`
  display: flex;
  align-items: center;
  gap: 7px;
  height: 26px;
`;
const Dot = styled.button<{ $dim?: boolean }>`
  width: 6px;
  height: 6px;
  justify-self: center;
  border-radius: 50%;
  background: ${(p) => (p.$dim ? "#5c5c5c" : "#e5e5e5")};
`;
const GroupField = styled.span`
  display: flex;
  align-items: center;
  height: 26px;
  border-radius: 5px;
  overflow: hidden;
  background: #1d1d1d;
  padding-left: 6px;
`;
const GroupInput = styled.input`
  flex: 1;
  min-width: 0;
`;
const SwapButton = styled.button`
  display: flex;
  align-items: center;
  justify-content: center;
  width: 28px;
  height: 100%;
  color: #777;
  background: #484848;
`;
const TightLine = styled.div`
  grid-column: 1 / -1;
  margin-bottom: -4px;
  display: grid;
  grid-template-columns: subgrid;
  align-items: center;
`;
const SpacedLine = styled(TightLine)`
  margin: 16px 0 0;
`;
const SubPanels = styled.div`
  display: flex;
  flex-direction: column;
  gap: 10px;
  padding: 19px 0 0 22px;
`;
const SubPanel = styled.button`
  display: flex;
  align-items: center;
  gap: 9px;
  height: 26px;
`;

const propTabs: [string, string, string][][] = [
  [["tools", "Tool", "#b0b0b0"]],
  [["render", "Render", "#b0b0b0"], ["output", "Output", "#b0b0b0"], ["stack", "View Layer", "#b0b0b0"],
   ["scene", "Scene", "#b0b0b0"], ["world", "World", RED]],
  [["boxLine", "Collection", "#e5e5e5"]],
  [["object", "Object", ORANGE], ["wrench", "Modifiers", "#7c9cf5"], ["particles", "Particles", "#6683d0"],
   ["physics", "Physics", "#6683d0"], ["constraint", "Constraints", "#6683d0"], ["meshData", "Data", GREEN],
   ["material", "Material", RED]],
];

const PropertiesArea = () => (
  <Properties>
    <PropHeader>
      <IconMenu icon="toggles" label="Editor type" />
      <SearchShift>
        <SearchBox><Icon name="search" /><SearchInput placeholder="Search" aria-label="Search the properties" /></SearchBox>
      </SearchShift>
      <Control $w={28} aria-label="Options"><Caret /></Control>
    </PropHeader>
    <PropBody>
      <PropTabs>
        {propTabs.map((group, i) => (
          <div key={i}>
            {group.map(([icon, label, color]) => (
              <PropTab key={icon} aria-label={label} $on={icon === "wrench"}><Icon name={icon} color={color} /></PropTab>
            ))}
          </div>
        ))}
      </PropTabs>
      <PropContent>
        <Crumbs>
          <Icon name="objectMode" />Cube.019
          <CrumbArrow><ArrowRight /></CrumbArrow>
          <Icon name="solidify" />Solidify
          <PinButton aria-label="Pin"><Icon name="pin" /></PinButton>
        </Crumbs>
        <AddModifier><Icon name="plus" /><span>Add Modifier</span></AddModifier>
        <Modifier>
          <ModHead>
            <ArrowDown />
            <Icon name="solidify" />
            <ModStrip>
              <ModName aria-label="Modifier name" defaultValue="Solidify" />
              <Segment $w={29} $tone="grey" aria-label="On cage"><Icon name="meshData" /></Segment>
              <Segment $w={29} $tone="blue" aria-label="Edit mode"><Icon name="editMode" /></Segment>
              <Segment $w={29} $tone="blue" aria-label="Realtime"><Icon name="monitor" /></Segment>
              <Segment $w={29} $tone="blue" aria-label="Render"><Icon name="cameraBlue" /></Segment>
              <Segment $w={28} aria-label="Modifier menu"><ArrowDown /></Segment>
            </ModStrip>
            <IconButton aria-label="Remove modifier"><Icon name="cross" /></IconButton>
            <Grip />
          </ModHead>
          <Fields>
            <Label htmlFor="mode">Mode</Label>
            <ModeBox>
              <PickerSelect id="mode" defaultValue="Simple"><option>Simple</option></PickerSelect><Caret />
            </ModeBox>
            <Dot aria-label="Animate mode" />
            <Label htmlFor="thickness">Thickness</Label>
            <Value id="thickness" defaultValue="0.3 m" />
            <Dot aria-label="Animate thickness" />
            <Label htmlFor="offset">Offset</Label>
            <Value id="offset" defaultValue="-1.0000" />
            <Dot aria-label="Animate offset" />
            <span />
            <TickLine><Tick type="checkbox" />Even Thickness</TickLine>
            <Dot aria-label="Animate even thickness" />
            <TightLine>
              <Label as="span">Rim</Label>
              <TickLine><Tick type="checkbox" defaultChecked />Fill</TickLine>
              <Dot aria-label="Animate fill" />
            </TightLine>
            <span />
            <TickLine><Tick type="checkbox" />Only Rim</TickLine>
            <Dot aria-label="Animate only rim" />
            <SpacedLine>
              <Label htmlFor="vgroup">Vertex Group</Label>
              <GroupField>
                <Icon name="vgroup" />
                <GroupInput id="vgroup" />
                <SwapButton aria-label="Invert"><Icon name="swap" /></SwapButton>
              </GroupField>
            </SpacedLine>
            <Label htmlFor="factor" $dim>Factor</Label>
            <Value id="factor" defaultValue="0.000" disabled />
            <Dot $dim aria-label="Animate factor" />
          </Fields>
          <SubPanels>
            {["Normals", "Materials", "Edge Data", "Thickness Clamp", "Output Vertex Groups"].map((t) => (
              <SubPanel key={t}><ArrowRight />{t}</SubPanel>
            ))}
          </SubPanels>
        </Modifier>
      </PropContent>
    </PropBody>
  </Properties>
);

/* ---------- status bar ---------- */

const StatusBar = styled.footer`
  display: flex;
  align-items: center;
  gap: 14px;
  height: 34px;
  padding: 2px 17px 0 14px;
  color: #989898;
`;
const Version = styled.span`
  margin-left: auto;
  display: flex;
  align-items: center;
  gap: 11px;
  & > span { padding-left: 5px; border-left: 2px solid #8a8a8a; }
`;
const Mouse = ({ part }: { part: number }) => (
  <svg width="18" height="24" viewBox="0 0 18 24" aria-hidden="true">
    <rect x="1" y="1" width="16" height="22" rx="4.500" fill="none" stroke="#989898" strokeWidth="1.500" />
    {part === 0 && <path d="M1 5a4 4 0 0 1 4-4h3v11H1z" fill="#989898" />}
    {part === 1 && <rect x="6" y="3" width="6" height="9" rx="2" fill="#989898" />}
    {part === 2 && <path d="M17 5a4 4 0 0 0-4-4h-3v11h7z" fill="#989898" />}
  </svg>
);

const workspaces = ["Layout", "Modeling", "Sculpting", "UV Editing", "Texture Paint", "Shading", "Animation", "Rendering", "Compositing", "Geometry Nodes", "Scripting"];

export default function App() {
  return (
    <Page>
      <GlobalStyle />
      <Notch />
      <TopBar>
        <MainMenu>
          <Logo />
          {["File", "Edit", "Render", "Window", "Help"].map((m) => <MenuLink key={m}>{m}</MenuLink>)}
        </MainMenu>
        <Tabs>
          {workspaces.map((w, i) => <Tab key={w} $on={i === 0}>{w}</Tab>)}
          <TabPlus aria-label="Add workspace"><Icon name="plus" /></TabPlus>
        </Tabs>
        <SceneTools>
          <Joined>
            <Segment $w={43} aria-label="Browse scenes"><Icon name="scene" /><Caret /></Segment>
            <NameBox $w={118} aria-label="Scene name" defaultValue="Scene" />
            <PinCell><Icon name="pin" /></PinCell>
            <Segment $w={29} $tone="grey" aria-label="New scene"><Icon name="copy" /></Segment>
            <Segment $w={28} $faint aria-label="Remove scene"><Icon name="cross" /></Segment>
          </Joined>
          <Joined>
            <Segment $w={44} aria-label="Browse view layers"><Icon name="stack" /><Caret /></Segment>
            <NameBox $w={116} aria-label="View layer name" defaultValue="ViewLayer" />
            <Segment $w={29} $tone="grey" aria-label="New view layer"><Icon name="copy" /></Segment>
            <Segment $w={28} $faint aria-label="Remove view layer"><Icon name="cross" /></Segment>
          </Joined>
        </SceneTools>
      </TopBar>
      <Workspace>
        <Column $gap={5}>
          <ViewportArea />
          <TimelineArea />
        </Column>
        <Column $gap={7}>
          <OutlinerArea />
          <PropertiesArea />
        </Column>
      </Workspace>
      <StatusBar>
        <Row $gap={6}><Mouse part={0} />Select (Toggle)</Row>
        <Row $gap={6}><Mouse part={1} />Dolly View</Row>
        <Row $gap={6}><Mouse part={2} />Lasso Select</Row>
        <Version><Icon name="offline" /><span>4.4.3</span></Version>
      </StatusBar>
    </Page>
  );
}
